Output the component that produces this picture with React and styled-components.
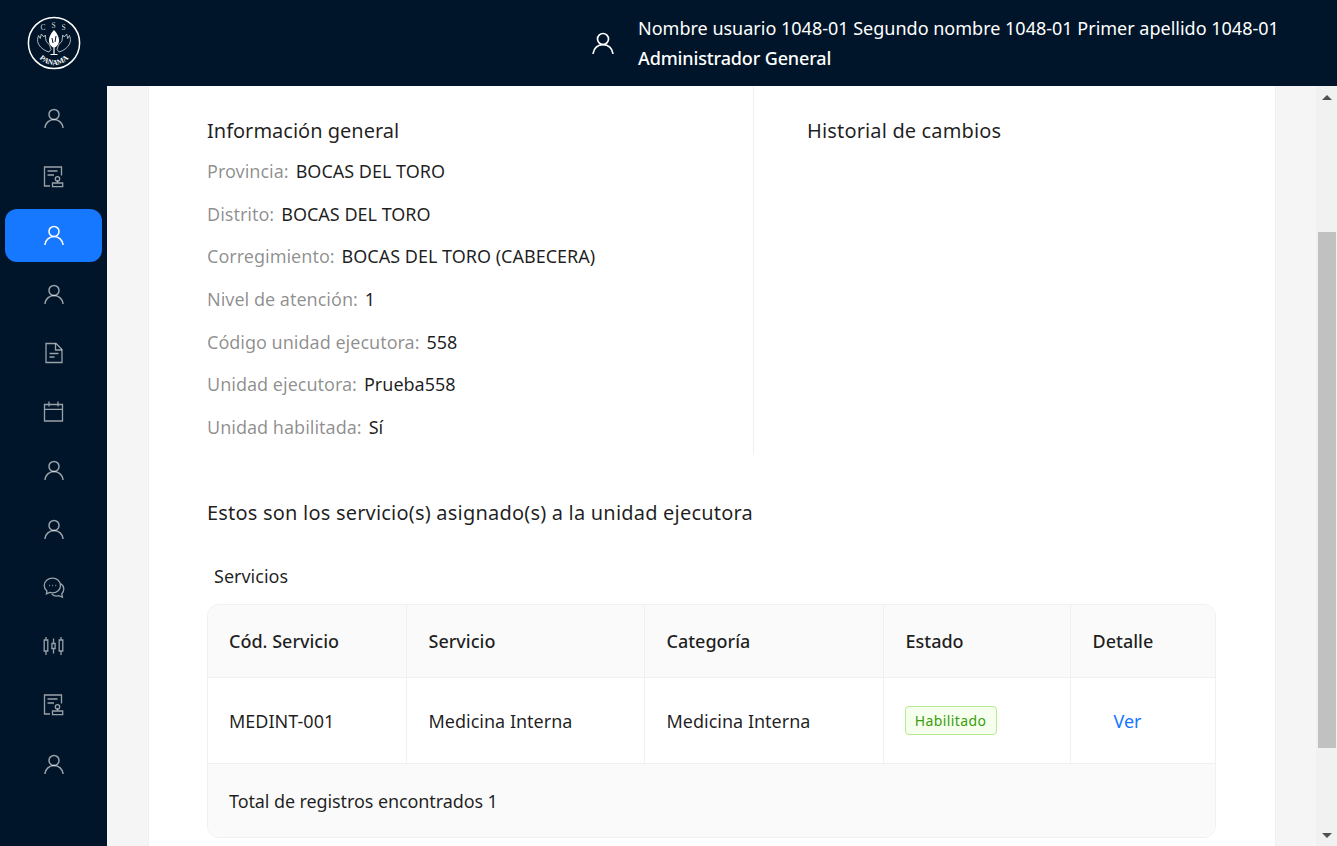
import React from 'react';
import styled, { createGlobalStyle } from 'styled-components';

const GlobalStyle = createGlobalStyle`
  html, body { margin: 0; height: 100%; overflow: hidden; }
  body {
    font-family: "Noto Sans", "Open Sans", sans-serif;
    color: rgba(0, 0, 0, 0.88);
    background: #f5f5f5;
  }
`;

const UserIcon = ({ size = 20 }) => (
  <svg width={size} height={size} viewBox="0 0 20 20" fill="none" stroke="currentColor" strokeWidth="1.5" strokeLinecap="round">
    <circle cx="10" cy="6.4" r="5" />
    <path d="M1 19.4c.6-4.3 4-7.9 9-7.9s8.400 3.600 9 7.900" />
  </svg>
);

const StampIcon = () => (
  <svg width="21" height="22" viewBox="0 0 21 22" fill="none" stroke="currentColor" strokeWidth="1.3">
    <path d="M7 20H1.500V1h17v8.500" />
    <path d="M4.500 5h10M4.500 9h6.500" />
    <circle cx="14.500" cy="12.800" r="2.200" />
    <path d="M14.500 15v2M9.500 17h10.200v3.700H9.500z" />
  </svg>
);

const FileIcon = () => (
  <svg width="20" height="22" viewBox="0 0 20 22" fill="none" stroke="currentColor" strokeWidth="1.3">
    <path d="M2 1.500h10l6 6v13H2z" />
    <path d="M11.500 1.500v6.500H18M5.500 11.500h9M5.500 15h5" />
  </svg>
);

const CalendarIcon = () => (
  <svg width="21" height="21" viewBox="0 0 21 21" fill="none" stroke="currentColor" strokeWidth="1.3">
    <path d="M1.500 3.500h18v16.500h-18zM1.500 8.300h18M6 .5v5M15 .5v5" />
  </svg>
);

const ChatIcon = () => (
  <svg width="22" height="22" viewBox="0 0 22 22" fill="none" stroke="currentColor" strokeWidth="1.3">
    <path d="M9.500 1.200c-4.500 0-8.300 3-8.300 7.300 0 2.300 1.100 4.100 2.700 5.400l-.5 3 3.300-1.500c.9.300 1.800.4 2.800.4 4.500 0 8-3.200 8-7.300s-3.500-7.300-8-7.300z" />
    <path d="M17.500 6.500c2 1.200 3.300 3.200 3.300 5.500 0 1.900-.8 3.500-2 4.700l.6 3.500-3.600-1.500c-2.300.7-5.100.2-7-1.700" />
    <path d="M6 8.500h.8M9.200 8.500h.8M12.400 8.500h.8" />
  </svg>
);

const CandleIcon = () => (
  <svg width="21" height="20" viewBox="0 0 21 20" fill="none" stroke="currentColor" strokeWidth="1.3">
    <path d="M1.200 4h3.600v11H1.200zM3 1v3M3 15v4M8.900 7.500h3.200v5H8.900zM10.500 2.500v5M10.500 12.500v5M16.200 4h3.600v11h-3.600zM18 1v3M18 15v4" />
  </svg>
);

const menuItems = [UserIcon, StampIcon, UserIcon, UserIcon, FileIcon, CalendarIcon, UserIcon, UserIcon, ChatIcon, CandleIcon, StampIcon, UserIcon];

const generalInfo = [
  ['Provincia:', 'BOCAS DEL TORO'],
  ['Distrito:', 'BOCAS DEL TORO'],
  ['Corregimiento:', 'BOCAS DEL TORO (CABECERA)'],
  ['Nivel de atención:', '1'],
  ['Código unidad ejecutora:', '558'],
  ['Unidad ejecutora:', 'Prueba558'],
  ['Unidad habilitada:', 'Sí'],
];

const Logo = () => (
  <svg width="54" height="54" viewBox="0 0 54 54" fill="none">
    <circle cx="27" cy="27" r="25.600" stroke="#fff" strokeWidth="1.500" />
    <text x="13.500" y="14" fill="#cfd4da" fontSize="7.500" fontFamily="Liberation Serif, serif">C</text>
    <text x="24.500" y="12" fill="#cfd4da" fontSize="7.500" fontFamily="Liberation Serif, serif">S</text>
    <text x="34.500" y="14" fill="#cfd4da" fontSize="7.500" fontFamily="Liberation Serif, serif">S</text>
    <path d="M27 14c3 3 5.500 7.500 5 11.500-.4 3-2.500 5.500-5 6.500-2.500-1-4.600-3.500-5-6.500-.5-4 2-8.500 5-11.500z" fill="#fff" />
    <path d="M25 22l1 5M29 20l-1 6" stroke="#001529" strokeWidth="1" />
    <path d="M27 32v6M23.500 38.500h7" stroke="#fff" strokeWidth="1.200" />
    <path d="M22 36c-4-1-8.500-4-10.500-8-1.500-3-1-6 0-8.500l1.800 3 1-4.500 2.500 3 1.500-2 .7 6 3.500 4 1.500 4.500zM32 36c4-1 8.500-4 10.500-8 1.500-3 1-6 0-8.500l-1.800 3-1-4.500-2.500 3-1.500-2-.7 6-3.500 4-1.500 4.500z" stroke="#d5dae0" strokeWidth=".8" />
    <path id="logoArc" d="M6 31C9 43 19 49 27 49S45 43 48 31" stroke="none" />
    <text fill="#fff" fontSize="7.500" fontWeight="700" fontFamily="Liberation Serif, serif">
      <textPath href="#logoArc" startOffset="50%" textAnchor="middle">PANAMA</textPath>
    </text>
  </svg>
);

export default function App() {
  return (
    <>
      <GlobalStyle />
      <Layout>
        <TopBar>
          <LogoSlot><Logo /></LogoSlot>
          <UserBlock>
            <UserGlyph><UserIcon size={22} /></UserGlyph>
            <UserText>
              <UserName>Nombre usuario 1048-01 Segundo nombre 1048-01 Primer apellido 1048-01</UserName>
              <UserRole>Administrador General</UserRole>
            </UserText>
          </UserBlock>
        </TopBar>
        <Body>
          <SideMenu>
            {menuItems.map((Icon, i) => (
              <MenuItem key={i} $active={i === 2}><Icon /></MenuItem>
            ))}
          </SideMenu>
          <Main>
            <Card>
              <Columns>
                <InfoColumn>
                  <SectionTitle>Información general</SectionTitle>
                  {generalInfo.map(([label, value]) => (
                    <InfoRow key={label}>
                      <InfoLabel>{label}</InfoLabel>
                      <span>{value}</span>
                    </InfoRow>
                  ))}
                </InfoColumn>
                <HistoryColumn>
                  <SectionTitle $spacing="0.15px">Historial de cambios</SectionTitle>
                </HistoryColumn>
              </Columns>
              <ServicesTitle>Estos son los servicio(s) asignado(s) a la unidad ejecutora</ServicesTitle>
              <TableCaption>Servicios</TableCaption>
              <TableBox>
                <Table>
                  <colgroup>
                    <col width="198" />
                    <col width="238" />
                    <col width="239" />
                    <col width="187" />
                    <col width="145" />
                  </colgroup>
                  <thead>
                    <tr>
                      <HeadCell>Cód. Servicio</HeadCell>
                      <HeadCell>Servicio</HeadCell>
                      <HeadCell>Categoría</HeadCell>
                      <HeadCell>Estado</HeadCell>
                      <HeadCell>Detalle</HeadCell>
                    </tr>
                  </thead>
                  <tbody>
                    <tr>
                      <BodyCell>MEDINT-001</BodyCell>
                      <BodyCell>Medicina Interna</BodyCell>
                      <BodyCell>Medicina Interna</BodyCell>
                      <BodyCell><StatusTag>Habilitado</StatusTag></BodyCell>
                      <BodyCell><LinkButton>Ver</LinkButton></BodyCell>
                    </tr>
                  </tbody>
                </Table>
                <TableFooter>Total de registros encontrados 1</TableFooter>
              </TableBox>
            </Card>
            <ScrollTrack>
              <ArrowUp />
              <ScrollThumb />
              <ArrowDown />
            </ScrollTrack>
          </Main>
        </Body>
      </Layout>
    </>
  );
}

const Layout = styled.div`
  display: flex;
  flex-direction: column;
  height: 846px;
  overflow: hidden;
`;

const TopBar = styled.header`
  flex: 0 0 86px;
  display: flex;
  align-items: center;
  background: #001529;
  color: #fff;
`;

const LogoSlot = styled.div`
  width: 107px;
  display: flex;
  justify-content: center;
`;

const UserBlock = styled.div`
  margin-left: 485px;
  display: flex;
  align-items: center;
`;

const UserGlyph = styled.div`
  width: 46px;
  display: flex;
  color: #fff;
`;

const UserText = styled.div`
  display: flex;
  flex-direction: column;
  font-size: 18px;
  line-height: 30px;
  white-space: nowrap;
`;

const UserName = styled.span``;

const UserRole = styled.span`
  font-weight: 500;
  letter-spacing: -0.14px;
`;

const Body = styled.div`
  flex: 1;
  display: flex;
  min-height: 0;
`;

const SideMenu = styled.nav`
  width: 107px;
  flex: none;
  box-sizing: border-box;
  padding: 5.400px 5px 0;
  display: flex;
  flex-direction: column;
  gap: 5.730px;
  background: #001529;
`;

const MenuItem = styled.div`
  flex: 0 0 53px;
  display: flex;
  align-items: center;
  justify-content: center;
  border-radius: 12px;
  color: ${p => (p.$active ? '#fff' : 'rgba(255, 255, 255, 0.6)')};
  background: ${p => (p.$active ? '#1677ff' : 'transparent')};
`;

const Main = styled.main`
  flex: 1;
  display: flex;
  min-width: 0;
  padding-left: 41px;
  background: #f5f5f5;
`;

const Card = styled.section`
  width: 1128px;
  flex: none;
  box-sizing: border-box;
  padding: 0 59px 0 58px;
  background: #fff;
  border-left: 1px solid #f0f0f0;
  border-right: 1px solid #f0f0f0;
  overflow: hidden;
`;

const Columns = styled.div`
  display: flex;
  height: 369px;
  margin-left: -58px;
  margin-right: -59px;
`;

const InfoColumn = styled.div`
  width: 605px;
  box-sizing: border-box;
  padding: 30px 0 0 58px;
  border-right: 1px solid #f0f0f0;
`;

const HistoryColumn = styled.div`
  flex: 1;
  padding: 30px 0 0 53px;
`;

const SectionTitle = styled.h2`
  margin: 0 0 10px;
  font-size: 20px;
  line-height: 30px;
  font-weight: 400;
  letter-spacing: ${p => p.$spacing || 'normal'};
`;

const InfoRow = styled.div`
  display: flex;
  gap: 7px;
  height: 42.700px;
  font-size: 18px;
  line-height: 30px;
`;

const InfoLabel = styled.span`
  color: rgba(0, 0, 0, 0.45);
`;

const ServicesTitle = styled.h2`
  margin: 43px 0 0;
  font-size: 20px;
  line-height: 30px;
  font-weight: 400;
  letter-spacing: 0.2px;
`;

const TableCaption = styled.div`
  margin: 33px 0 0 7px;
  font-size: 18px;
  line-height: 30px;
`;

const TableBox = styled.div`
  margin-top: 13px;
  width: 1009px;
  box-sizing: border-box;
  border: 1px solid #f0f0f0;
  border-radius: 12px;
  overflow: hidden;
`;

const Table = styled.table`
  width: 1007px;
  table-layout: fixed;
  border-collapse: collapse;
  font-size: 18px;
`;

const HeadCell = styled.th`
  height: 72px;
  padding: 0 22px;
  text-align: left;
  font-weight: 500;
  background: #fafafa;
  border-right: 1px solid #f0f0f0;
  border-bottom: 1px solid #f0f0f0;
  &:first-child { padding-left: 21px; }
  &:last-child { border-right: 0; }
`;

const BodyCell = styled.td`
  height: 85px;
  padding: 0 22px;
  border-right: 1px solid #f0f0f0;
  border-bottom: 1px solid #f0f0f0;
  &:first-child { padding-left: 21px; }
  &:last-child { border-right: 0; }
`;

const StatusTag = styled.span`
  display: inline-flex;
  align-items: center;
  justify-content: center;
  box-sizing: border-box;
  width: 92px;
  height: 29px;
  margin-left: -1px;
  font-size: 14px;
  letter-spacing: 0.4px;
  color: #389e0d;
  background: #f6ffed;
  border: 1px solid #b7eb8f;
  border-radius: 4px;
`;

const LinkButton = styled.a`
  display: block;
  padding-left: 21px;
  color: #1677ff;
`;

const TableFooter = styled.div`
  height: 73px;
  display: flex;
  align-items: center;
  padding-left: 21px;
  font-size: 18px;
  letter-spacing: -0.1px;
  background: #fafafa;
`;

const ScrollTrack = styled.div`
  margin-left: 40px;
  width: 21px;
  flex: none;
  box-sizing: border-box;
  padding: 9px 1px 8px 2px;
  display: flex;
  flex-direction: column;
  align-items: center;
  background: #f1f1f1;
`;

const ArrowUp = styled.div`
  width: 0;
  height: 0;
  border-left: 5px solid transparent;
  border-right: 5px solid transparent;
  border-bottom: 5px solid #505050;
`;

const ArrowDown = styled.div`
  width: 0;
  height: 0;
  margin-top: auto;
  border-left: 5px solid transparent;
  border-right: 5px solid transparent;
  border-top: 5px solid #505050;
`;

const ScrollThumb = styled.div`
  width: 18px;
  height: 516px;
  margin-top: 132px;
  background: #c1c1c1;
`;
